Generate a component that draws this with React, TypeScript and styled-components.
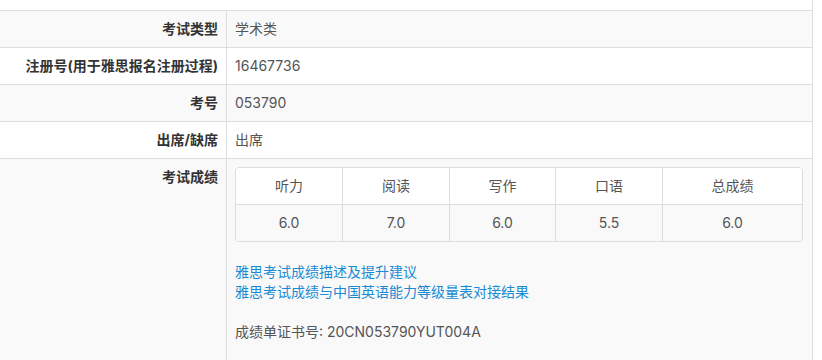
import React from "react";
import styled, { createGlobalStyle } from "styled-components";

const GlobalStyle = createGlobalStyle`
  html, body {
    margin: 0;
    padding: 0;
    background: #fff;
  }
  body {
    font-family: Inter, "Noto Sans CJK SC", sans-serif;
    font-size: 14px;
    line-height: 20px;
    color: #333;
  }
`;

const InfoTable = styled.div`
  display: flex;
  flex-direction: column;
  width: 813px;
  height: 360px;
  overflow: hidden;
  border-right: 1px solid #ddd;
  box-sizing: border-box;
`;

const Row = styled.div<{ $striped?: boolean; $fill?: boolean }>`
  display: flex;
  flex: ${(p) => (p.$fill ? "1" : "none")};
  background: ${(p) => (p.$striped ? "#f9f9f9" : "#fff")};
  border-top: 1px solid #ddd;

  &:first-child {
    border-top: none;
  }
`;

const TopRow = styled(Row)`
  height: 10px;
`;

const Label = styled.div`
  width: 227px;
  flex: none;
  box-sizing: border-box;
  padding: 8px;
  text-align: right;
  font-weight: bold;
  color: #333;
  border-right: 1px solid #ddd;
`;

const Value = styled.div`
  flex: 1;
  padding: 8px;
  color: #555;
`;

const ScoreGrid = styled.div`
  display: grid;
  grid-template-columns: 106px 107px 106px 107px 140px;
  width: 568px;
  box-sizing: border-box;
  border: 1px solid #ddd;
  border-radius: 4px;
  overflow: hidden;
  margin-bottom: 20px;
`;

const ScoreCell = styled.div<{ $head?: boolean }>`
  height: 36px;
  line-height: 36px;
  text-align: center;
  color: #555;
  background: ${(p) => (p.$head ? "#fff" : "#f9f9f9")};
  border-top: ${(p) => (p.$head ? "none" : "1px solid #ddd")};
  border-left: 1px solid #ddd;

  &:nth-child(5n + 1) {
    border-left: none;
  }
`;

const Link = styled.a`
  display: block;
  color: #1a8ad4;
  text-decoration: none;
`;

const CertLine = styled.div`
  margin-top: 20px;
  color: #555;
`;

const rows = [
  { label: "考试类型", value: "学术类" },
  { label: "注册号(用于雅思报名注册过程)", value: "16467736" },
  { label: "考号", value: "053790" },
  { label: "出席/缺席", value: "出席" },
];

const heads = ["听力", "阅读", "写作", "口语", "总成绩"];
const scores = ["6.0", "7.0", "6.0", "5.5", "6.0"];

export default function App() {
  return (
    <>
      <GlobalStyle />
      <InfoTable>
        <TopRow />
        {rows.map((r, i) => (
          <Row key={r.label} $striped={i % 2 === 0}>
            <Label>{r.label}</Label>
            <Value>{r.value}</Value>
          </Row>
        ))}
        <Row $striped $fill>
          <Label>考试成绩</Label>
          <Value>
            <ScoreGrid>
              {heads.map((h) => (
                <ScoreCell key={h} $head>
                  {h}
                </ScoreCell>
              ))}
              {scores.map((s, i) => (
                <ScoreCell key={i}>{s}</ScoreCell>
              ))}
            </ScoreGrid>
            <Link href="#">雅思考试成绩描述及提升建议</Link>
            <Link href="#">雅思考试成绩与中国英语能力等级量表对接结果</Link>
            <CertLine>成绩单证书号: 20CN053790YUT004A</CertLine>
          </Value>
        </Row>
      </InfoTable>
    </>
  );
}
